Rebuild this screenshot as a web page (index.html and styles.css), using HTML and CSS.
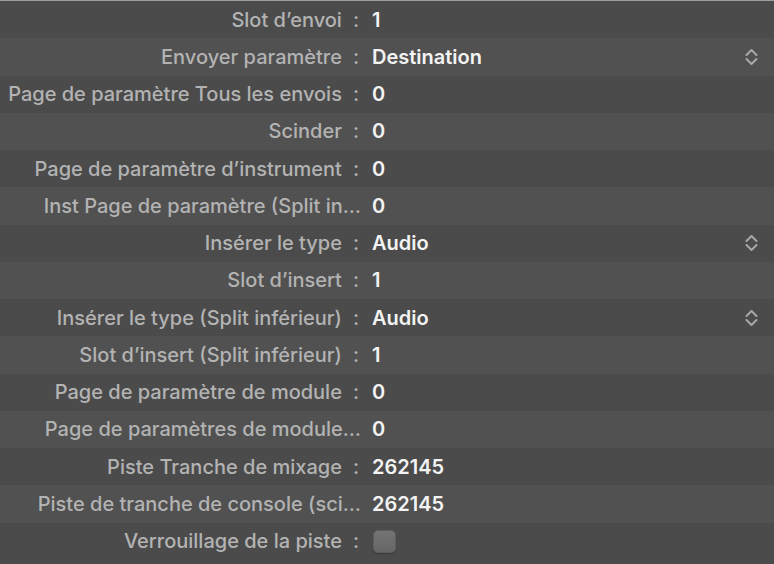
FILE: index.html
```html
<!DOCTYPE html>
<html lang="fr">
<head>
<meta charset="utf-8">
<link rel="stylesheet" href="styles.css">
</head>
<body>
<div class="panel">
  <div class="row odd"><div class="label">Slot d’envoi<span class="colon">:</span></div><div class="value">1</div></div>
  <div class="row even"><div class="label">Envoyer paramètre<span class="colon">:</span></div><div class="value">Destination</div><svg class="chev" viewBox="0 0 13 20"><polyline points="1.5,8 6.5,3 11.5,8"/><polyline points="1.5,12 6.5,17 11.5,12"/></svg></div>
  <div class="row odd"><div class="label">Page de paramètre Tous les envois<span class="colon">:</span></div><div class="value">0</div></div>
  <div class="row even"><div class="label">Scinder<span class="colon">:</span></div><div class="value">0</div></div>
  <div class="row odd"><div class="label">Page de paramètre d’instrument<span class="colon">:</span></div><div class="value">0</div></div>
  <div class="row even"><div class="label">Inst Page de paramètre (Split in…</div><div class="value">0</div></div>
  <div class="row odd"><div class="label">Insérer le type<span class="colon">:</span></div><div class="value">Audio</div><svg class="chev" viewBox="0 0 13 20"><polyline points="1.5,8 6.5,3 11.5,8"/><polyline points="1.5,12 6.5,17 11.5,12"/></svg></div>
  <div class="row even"><div class="label">Slot d’insert<span class="colon">:</span></div><div class="value">1</div></div>
  <div class="row odd"><div class="label">Insérer le type (Split inférieur)<span class="colon">:</span></div><div class="value">Audio</div><svg class="chev" viewBox="0 0 13 20"><polyline points="1.5,8 6.5,3 11.5,8"/><polyline points="1.5,12 6.5,17 11.5,12"/></svg></div>
  <div class="row even"><div class="label">Slot d’insert (Split inférieur)<span class="colon">:</span></div><div class="value">1</div></div>
  <div class="row odd"><div class="label">Page de paramètre de module<span class="colon">:</span></div><div class="value">0</div></div>
  <div class="row even"><div class="label">Page de paramètres de module…</div><div class="value">0</div></div>
  <div class="row odd"><div class="label">Piste Tranche de mixage<span class="colon">:</span></div><div class="value">262145</div></div>
  <div class="row even"><div class="label">Piste de tranche de console (sci…</div><div class="value">262145</div></div>
  <div class="row odd"><div class="label">Verrouillage de la piste<span class="colon">:</span></div><div class="value"><span class="checkbox"></span></div></div>
</div>
</body>
</html>
```
FILE: styles.css
```css
html, body {
  margin: 0;
  padding: 0;
  background: #4b4b4b;
}
body {
  font-family: Inter, "Noto Sans", "Liberation Sans", sans-serif;
  font-size: 20px;
  width: 774px;
  height: 564px;
  overflow: hidden;
}
.panel {
  border-top: 1px solid #9c9c9c;
}
.row {
  display: grid;
  grid-template-columns: 361px 1fr auto;
  align-items: center;
  height: 37.25px;
}
.odd { background: #4b4b4b; }
.even { background: #515151; }
.label {
  text-align: right;
  color: #b3b3b3;
  font-weight: 500;
  white-space: nowrap;
  overflow: hidden;
}
.colon {
  display: inline-block;
  margin-left: 11px;
  margin-right: 2px;
}
.value {
  padding-left: 11px;
  color: #f3f3f3;
  font-weight: 600;
  display: flex;
  align-items: center;
}
.chev {
  width: 13px;
  height: 20px;
  margin-right: 16px;
  fill: none;
  stroke: #a8a8a8;
  stroke-width: 2;
  stroke-linecap: round;
  stroke-linejoin: round;
}
.checkbox {
  display: block;
  width: 21px;
  height: 21px;
  margin-left: 1px;
  border-radius: 5px;
  background: linear-gradient(#737373, #676767);
  border: 1px solid #5e5e5e;
  box-shadow: 0 1px 1px rgba(0,0,0,0.25);
}
```
